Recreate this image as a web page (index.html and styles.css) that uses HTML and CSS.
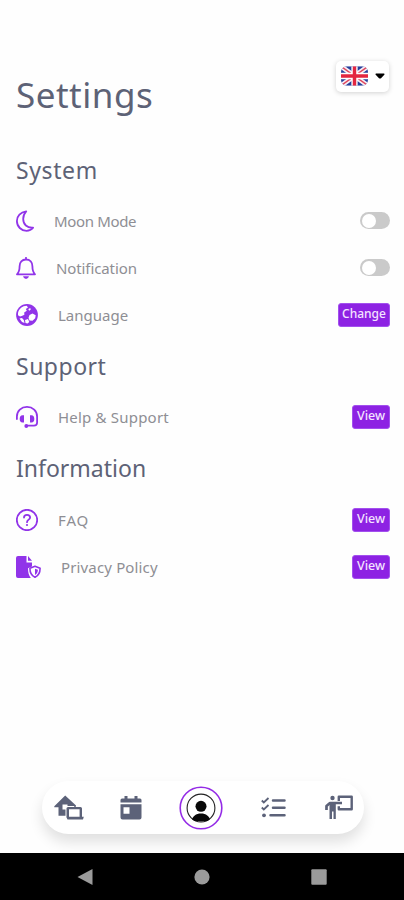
FILE: index.html
```html
<!DOCTYPE html>
<html lang="en">
<head>
<meta charset="utf-8">
<title>Settings</title>
<link rel="stylesheet" href="styles.css">
</head>
<body>
<div class="app">
  <header class="header">
    <h1>Settings</h1>
    <button class="locale" aria-label="Language">
      <svg class="flag" width="27" height="20" viewBox="0 0 28 20">
        <clipPath id="flag"><rect width="28" height="20" rx="6"/></clipPath>
        <g clip-path="url(#flag)">
          <path fill="#263f9b" d="M0 0h28v20H0z"/>
          <path stroke="#f4eef5" stroke-width="5" d="M0 0l28 20M28 0L0 20"/>
          <path stroke="#e2465c" stroke-width="1.5" d="M0 0l28 20M28 0L0 20"/>
          <path stroke="#fff" stroke-width="6.5" d="M14 0v20M0 10h28"/>
          <path stroke="#e32640" stroke-width="3.6" d="M14 0v20M0 10h28"/>
        </g>
      </svg>
      <svg width="10" height="6" viewBox="0 0 10 6"><path d="M1 .5h8q1 .4.3 1.3L6 5.2q-1 .7-2 0L.7 1.8Q0 .9 1 .5z"/></svg>
    </button>
  </header>

  <main class="content">
    <section>
      <h2 class="t-system">System</h2>
      <div class="row">
        <svg width="18" height="22" viewBox="0 0 18 22" class="line"><path d="M10.200 1.300C4.500 2.200.9 6.200.9 11c0 5.600 4.400 9.800 9.600 9.800 2.800 0 5-1.100 6.600-3.100-6.100.5-9.900-3.400-9.900-8.600 0-3.200 1.100-5.800 3-7.800z"/></svg>
        <span class="label t-moon">Moon Mode</span><i class="switch"></i>
      </div>
      <div class="row">
        <svg width="20" height="22" viewBox="0 0 20 22" class="line"><path d="M10 .8v1.700M1 17.300h18c-2-2-2.600-4-2.600-8C16.400 5 14 2.500 10 2.500S3.600 5 3.600 9.300c0 4-.6 6-2.600 8z"/><path class="solid" d="M7 19.200h6q-.8 2.800-3 2.800t-3-2.800z"/></svg>
        <span class="label t-notif">Notification</span><i class="switch"></i>
      </div>
      <div class="row">
        <svg width="22" height="22" viewBox="0 0 22 22"><circle cx="11" cy="11" r="10.900" fill="#9134e9"/><path fill="#fff" d="M2 9C2.800 4.800 6.500 2 10.700 1.800L12 3.500 9.800 5l1 1.800-2.600 1.600.2 2.300-2.600 1.200-1.800.6L2 11.300zM12.300 5l2-1 .4 1.800-1.600 1zM13.500 11l3-1.500 3.200 1.800-.5 3-2.700 2.500-3-.4-1-2.600zM3.500 14.500l2.500-.5 1.800 2 .7 3-2.500-1zM9 16l3-1 1.300 3-1.800 1.500-2-.4z"/></svg>
        <span class="label t-lang">Language</span><button class="action wide">Change</button>
      </div>
    </section>
    <section>
      <h2 class="t-support">Support</h2>
      <div class="row">
        <svg width="22" height="22" viewBox="0 0 22 22" class="line"><path d="M.9 13v-2.500C.9 5 5.300.9 11 .9S21.100 5 21.100 10.500v6q0 3.200-3.200 3.200H10"/><path class="solid" d="M8 9.300v7.200H6.500C4.600 16.500 3.700 15 3.700 13s.9-3.700 2.800-3.700zM14 9.300v7.200h1.500c1.900 0 2.800-1.500 2.800-3.500s-.9-3.700-2.800-3.700z"/><circle class="solid" cx="10.300" cy="20" r="1.900"/></svg>
        <span class="label t-help">Help &amp; Support</span><button class="action">View</button>
      </div>
    </section>
    <section>
      <h2 class="t-info">Information</h2>
      <div class="row">
        <svg width="22" height="22" viewBox="0 0 22 22" class="line"><circle cx="11" cy="11" r="10.200"/><path d="M8 8.600C8 6.700 9.200 5.800 11 5.800s3.100 1 3.100 2.600c0 2.200-3.100 2.300-3.100 4.800"/><circle class="solid" cx="11" cy="16" r="1.100"/></svg>
        <span class="label t-faq">FAQ</span><button class="action">View</button>
      </div>
      <div class="row">
        <svg width="25" height="22" viewBox="0 0 25 22"><path fill="#9134e9" d="M2 0h8.500v6.500H16v4l-4 1.800c0 4 .6 7 2.800 9.700H2q-2 0-2-2V2Q0 0 2 0zM12 0l4 4.800h-4z"/><path fill="#fff" stroke="#9134e9" stroke-width="1.600" stroke-linejoin="round" d="M19 10.200l5.100 2c0 4.500-1.600 7.500-5.100 9.100-3.500-1.600-5.100-4.600-5.100-9.100z"/><path fill="#9134e9" d="M19 12.700l2.900 1.100c-.1 2.500-1.100 4.100-2.900 5.200z"/></svg>
        <span class="label t-privacy">Privacy Policy</span><button class="action">View</button>
      </div>
    </section>
  </main>

  <nav class="tabs">
    <svg width="30" height="26" viewBox="0 0 30 26"><path fill="#5c6279" d="M11.200.5L22 10.500v1.300h-2V11h-7q-1.500 0-1.500 1.500v8.300H4.500v-8.600H.3v-1z"/><path fill="#fff" d="M8.500 9.500h5v5h-5z"/><path fill="#5c6279" fill-rule="evenodd" d="M14 12h12.500q1.500 0 1.500 1.500v8.300h1.800L29 24.500H13.500l-1.300-2.700h.3v-8.300Q12.500 12 14 12zM15 14.300v7.500h10.600v-7.500z"/></svg>
    <svg width="22" height="26" viewBox="0 0 22 26"><path fill="#5c6279" fill-rule="evenodd" d="M4.500 1h3v2.500h7V1h3v2.500H20q1.500 0 1.500 1.500v2.500H.5V5Q.5 3.500 2 3.500h2.500zM.5 9.300h21v13.200q0 2-2 2h-17q-2 0-2-2zM3.500 12.300v6.500h6v-6.500z"/></svg>
    <span class="profile"><svg width="44" height="44" viewBox="0 0 44 44"><circle cx="22" cy="22" r="20.800" fill="none" stroke="#942be6" stroke-width="1.600"/><clipPath id="face"><circle cx="22" cy="22" r="14.500"/></clipPath><circle cx="22" cy="22" r="13.900" fill="none" stroke="#222" stroke-width="1.100"/><circle cx="22" cy="20.300" r="5.500" fill="#080808"/><path clip-path="url(#face)" fill="#080808" d="M12.500 35c1-5 4.500-7.500 9.500-7.500s8.500 2.500 9.500 7.500z"/></svg></span>
    <svg width="25" height="22" viewBox="0 0 25 22" fill="none" stroke="#5c6279"><path stroke-width="2.500" stroke-linecap="round" d="M12 3.500h11.500M12 10.800h11.500M9.500 18.300h14"/><path stroke-width="1.800" d="M.8 3.500l2 2L7.500 1M.8 10.500l2 2L7.500 8"/><circle cx="3" cy="18.300" r="1.900" fill="#5c6279" stroke="none"/></svg>
    <svg width="28" height="25" viewBox="0 0 28 25"><g fill="none" stroke="#5c6279"><path stroke-width="2.400" stroke-linejoin="round" d="M13.800 6V1.700h12.900v12.600H13.800v-3"/><path stroke-width="2.700" stroke-linejoin="round" d="M1.500 15V11l3.500-3h12"/></g><circle cx="7.500" cy="3" r="2.200" fill="#5c6279"/><path fill="#5c6279" d="M4.500 7h6.300v17H8.500v-7.500H7V24H4.500z"/></svg>
  </nav>

  <footer class="system">
    <svg width="16" height="18" viewBox="0 0 16 18"><path d="M15.500 1v16L.5 9z"/></svg>
    <svg width="16" height="16" viewBox="0 0 16 16"><circle cx="8" cy="8" r="7.600"/></svg>
    <svg width="16" height="16" viewBox="0 0 16 16"><rect x=".3" y=".3" width="15.400" height="15.400" rx="1"/></svg>
  </footer>
</div>
</body>
</html>
```
FILE: styles.css
```css
* { box-sizing: border-box; }
body {
  margin: 0;
  background: #fff;
  font-family: "Noto Sans", "Open Sans", sans-serif;
}
svg { display: block; flex: none; }
.app {
  width: 404px;
  height: 900px;
  display: flex;
  flex-direction: column;
  background: #fefefe;
  overflow: hidden;
}
.header {
  height: 144px;
  padding: 61px 15px 0 16px;
  display: flex;
  justify-content: space-between;
  align-items: flex-start;
}
h1 {
  margin: 12px 0 0;
  font-size: 35px;
  line-height: 44px;
  font-weight: 400;
  letter-spacing: .5px;
  color: #5d6276;
}
.locale {
  width: 53px;
  height: 31px;
  padding: 0 4px 1px 5px;
  display: flex;
  align-items: center;
  justify-content: space-between;
  border: 0;
  border-radius: 5px;
  background: #fff;
  box-shadow: 0 1px 5px rgba(0, 0, 0, .18);
}
.content {
  flex: 1;
  padding: 0 14px 0 16px;
}
h2 {
  height: 55px;
  margin: 0;
  font-size: 23px;
  line-height: 56px;
  font-weight: 400;
  color: #5d6276;
}
h2.t-system { height: 53px; line-height: 52px; letter-spacing: .6px; }
h2.t-support { letter-spacing: .5px; }
h2.t-info { height: 56px; letter-spacing: 0; }
.row {
  height: 47px;
  display: flex;
  align-items: center;
}
.label {
  margin-left: 20px;
  flex: 1;
  font-size: 15px;
  line-height: 20px;
  color: #8e8e94;
}
.t-moon { letter-spacing: -.35px; }
.t-notif { letter-spacing: -.1px; }
.t-help { letter-spacing: .2px; }
.t-faq { letter-spacing: .9px; }
.t-privacy { letter-spacing: .15px; }
.line {
  fill: none;
  stroke: #9134e9;
  stroke-width: 1.8;
  stroke-linejoin: round;
  stroke-linecap: round;
}
.solid { fill: #9134e9; stroke: none; }
.switch {
  width: 30px;
  height: 17px;
  padding: 1.5px;
  border-radius: 9px;
  background: #cacaca;
}
.switch::before {
  content: "";
  display: block;
  width: 14px;
  height: 14px;
  border-radius: 50%;
  background: #fff;
}
.action {
  width: 38px;
  height: 24px;
  padding: 0 0 1px;
  border: 1px solid #a250ee;
  border-radius: 3px;
  background: #8d22e3;
  color: #f4e4ff;
  font: 500 12.5px/20px "Noto Sans", sans-serif;
}
.action.wide { width: 52px; font-size: 12px; }
.tabs {
  width: 322px;
  height: 53px;
  margin: 0 0 19px 42px;
  padding: 0 11px 0 12px;
  display: flex;
  align-items: center;
  justify-content: space-between;
  border-radius: 27px;
  background: #fff;
  box-shadow: 0 8px 14px rgba(0, 0, 0, .12);
}
.tabs > :nth-child(3) { margin-right: 2px; }
.tabs > :nth-child(4) { margin-right: 3px; }
.system {
  height: 47px;
  padding: 0 77px;
  display: flex;
  align-items: center;
  justify-content: space-between;
  background: #000;
  fill: #9b9b9b;
}
```
